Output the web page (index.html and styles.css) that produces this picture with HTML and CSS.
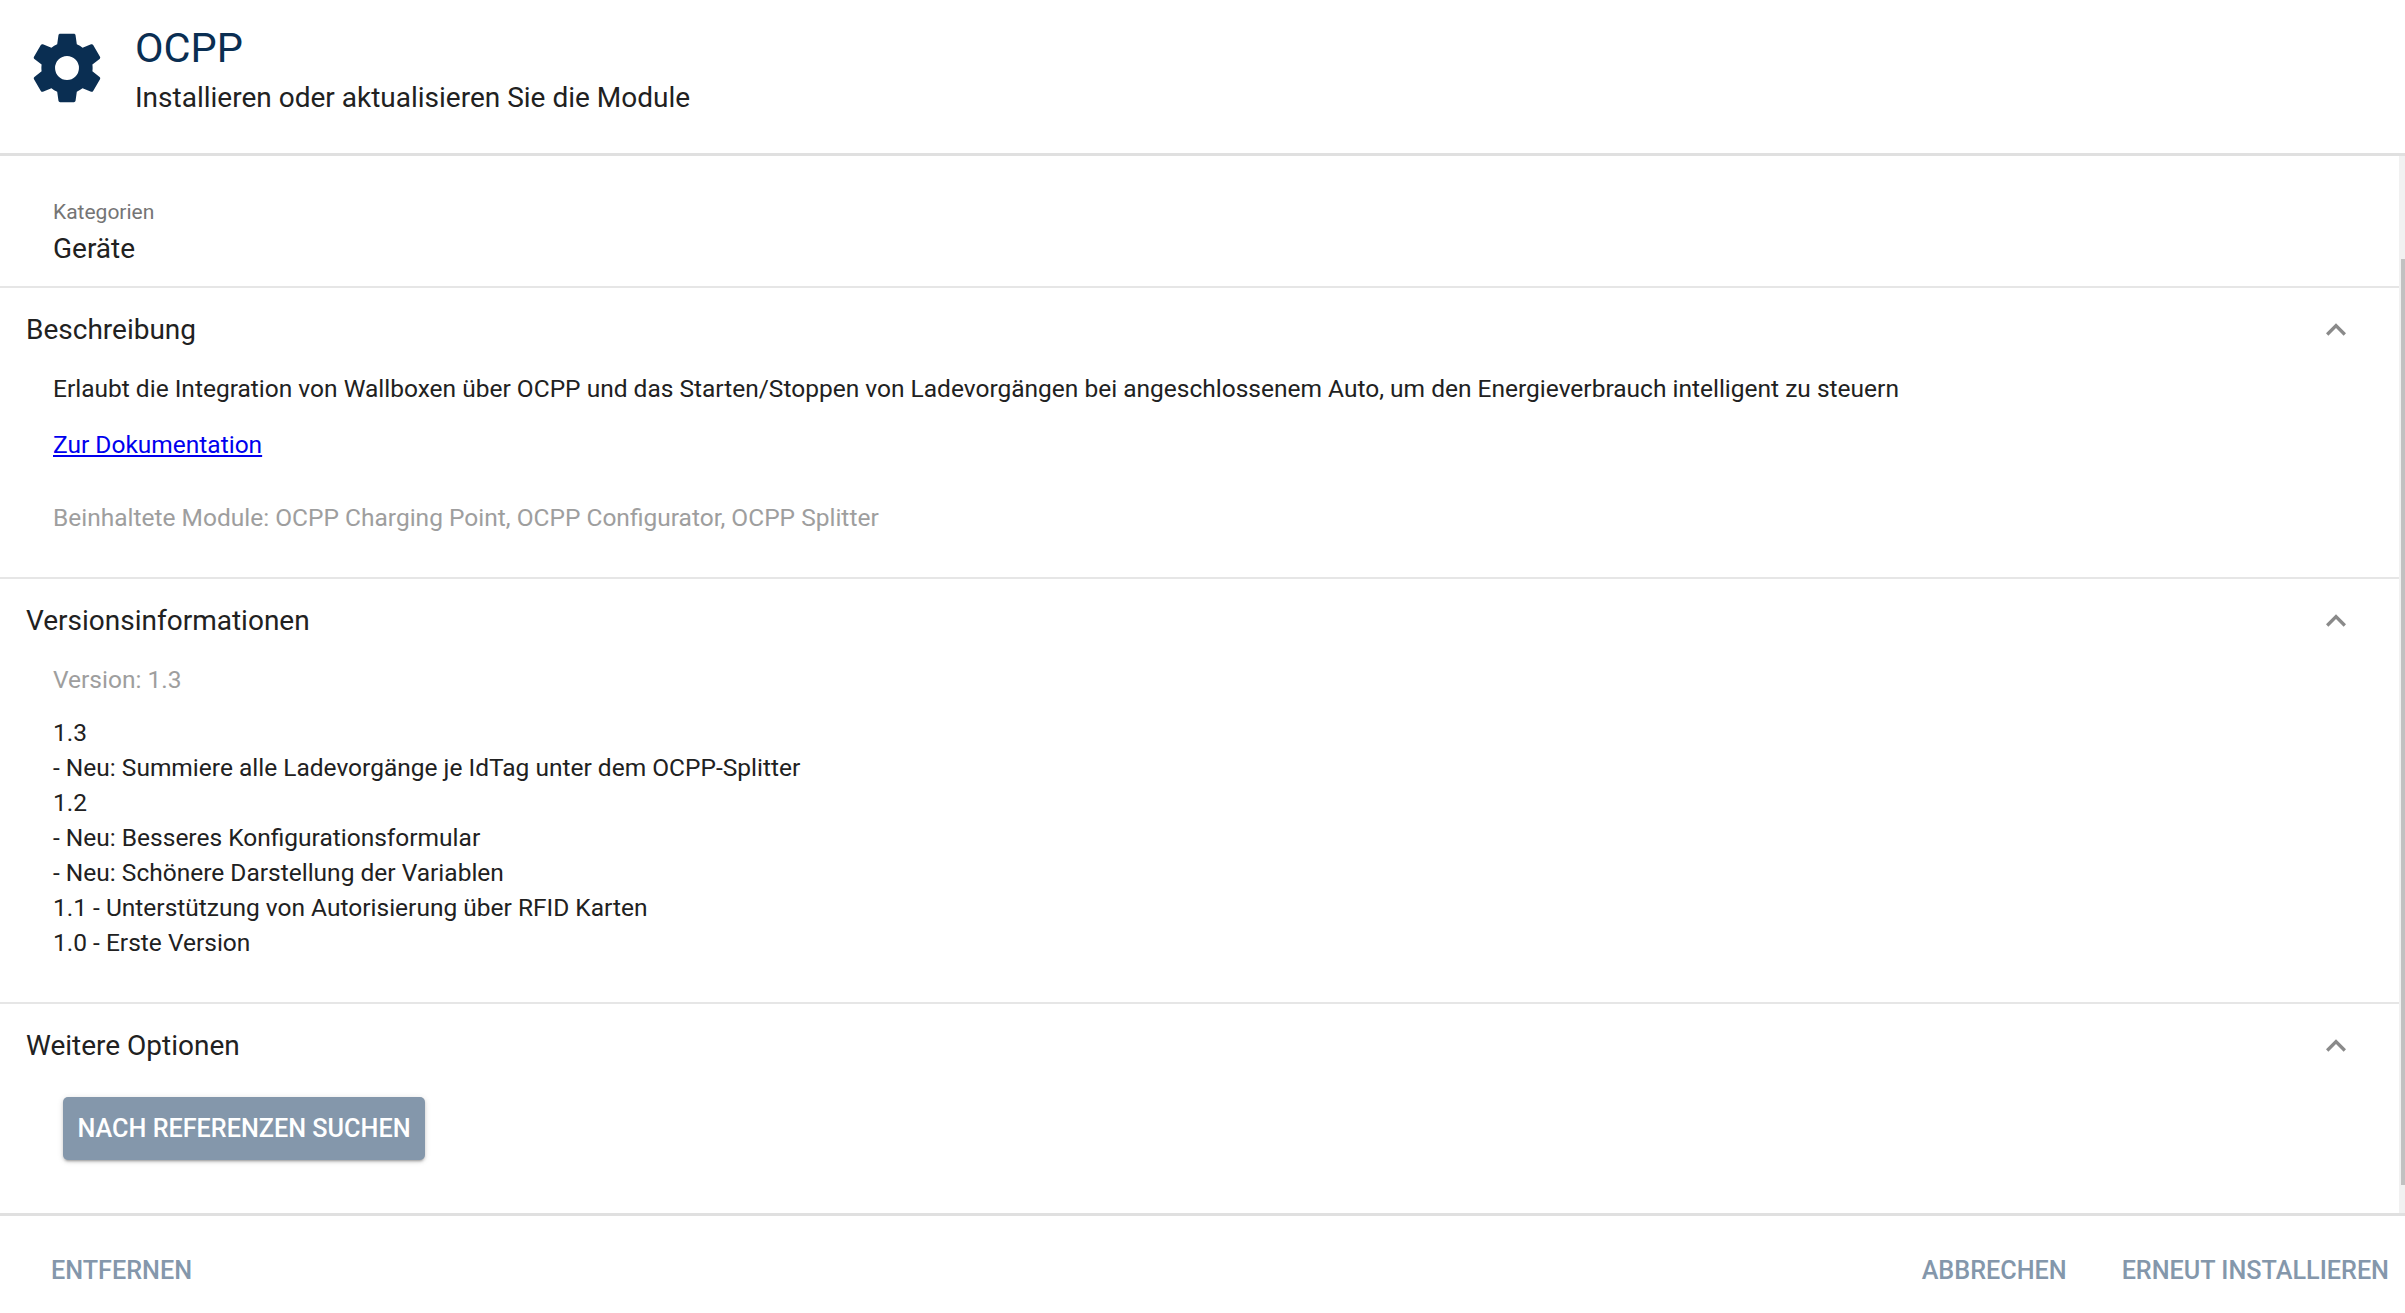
FILE: index.html
```html
<!DOCTYPE html>
<html lang="de">
<head>
    <meta charset="UTF-8">
    <title>OCPP</title>
    <link rel="stylesheet" href="styles.css">
</head>
<body>
    <div class="dialog">
        <div class="header">
            <svg class="header-icon" viewBox="0 0 24 24"><path d="M12,15.5A3.5,3.5 0 0,1 8.5,12A3.5,3.5 0 0,1 12,8.5A3.5,3.5 0 0,1 15.5,12A3.5,3.5 0 0,1 12,15.5M19.43,12.97C19.47,12.65 19.5,12.33 19.5,12C19.5,11.67 19.47,11.34 19.43,11L21.54,9.37C21.73,9.22 21.78,8.95 21.66,8.73L19.66,5.27C19.54,5.05 19.27,4.96 19.05,5.05L16.56,6.05C16.04,5.66 15.5,5.32 14.87,5.07L14.5,2.42C14.46,2.18 14.25,2 14,2H10C9.75,2 9.54,2.18 9.5,2.42L9.13,5.07C8.5,5.32 7.96,5.66 7.44,6.05L4.95,5.05C4.73,4.96 4.46,5.05 4.34,5.27L2.34,8.73C2.21,8.95 2.27,9.22 2.46,9.37L4.57,11C4.53,11.34 4.5,11.67 4.5,12C4.5,12.33 4.53,12.65 4.57,12.97L2.46,14.63C2.27,14.78 2.21,15.05 2.34,15.27L4.34,18.73C4.46,18.95 4.73,19.03 4.95,18.95L7.44,17.94C7.96,18.34 8.5,18.68 9.13,18.93L9.5,21.58C9.54,21.82 9.75,22 10,22H14C14.25,22 14.46,21.82 14.5,21.58L14.87,18.93C15.5,18.67 16.04,18.34 16.56,17.94L19.05,18.95C19.27,19.03 19.54,18.95 19.66,18.73L21.66,15.27C21.78,15.05 21.73,14.78 21.54,14.63L19.43,12.97Z"/></svg>
            <div class="header-text">
                <div class="title">OCPP</div>
                <div class="subtitle">Installieren oder aktualisieren Sie die Module</div>
            </div>
        </div>

        <div class="content">
            <div class="sections">
                <div class="categories">
                    <div class="categories-label">Kategorien</div>
                    <div class="categories-value">Geräte</div>
                </div>

                <div class="section section-desc">
                    <div class="section-head">
                        <span>Beschreibung</span>
                        <svg class="chevron" viewBox="0 0 24 24"><path d="M7.41,15.41L12,10.83L16.59,15.41L18,14L12,8L6,14L7.41,15.41Z"/></svg>
                    </div>
                    <div class="section-body">
                        <p class="desc">Erlaubt die Integration von Wallboxen über OCPP und das Starten/Stoppen von Ladevorgängen bei angeschlossenem Auto, um den Energieverbrauch intelligent zu steuern</p>
                        <p class="doc"><a href="#">Zur Dokumentation</a></p>
                        <p class="muted modules">Beinhaltete Module: OCPP Charging Point, OCPP Configurator, OCPP Splitter</p>
                    </div>
                </div>

                <div class="section section-version">
                    <div class="section-head">
                        <span>Versionsinformationen</span>
                        <svg class="chevron" viewBox="0 0 24 24"><path d="M7.41,15.41L12,10.83L16.59,15.41L18,14L12,8L6,14L7.41,15.41Z"/></svg>
                    </div>
                    <div class="section-body">
                        <p class="muted version">Version: 1.3</p>
                        <div class="changelog">
                            <div>1.3</div>
                            <div>- Neu: Summiere alle Ladevorgänge je IdTag unter dem OCPP-Splitter</div>
                            <div>1.2</div>
                            <div>- Neu: Besseres Konfigurationsformular</div>
                            <div>- Neu: Schönere Darstellung der Variablen</div>
                            <div>1.1 - Unterstützung von Autorisierung über RFID Karten</div>
                            <div>1.0 - Erste Version</div>
                        </div>
                    </div>
                </div>

                <div class="section section-options">
                    <div class="section-head">
                        <span>Weitere Optionen</span>
                        <svg class="chevron" viewBox="0 0 24 24"><path d="M7.41,15.41L12,10.83L16.59,15.41L18,14L12,8L6,14L7.41,15.41Z"/></svg>
                    </div>
                    <button class="raised">Nach Referenzen suchen</button>
                </div>
            </div>
            <div class="scrollbar"><div class="thumb"></div></div>
        </div>

        <div class="footer">
            <button class="text-btn">Entfernen</button>
            <div class="footer-right">
                <button class="text-btn">Abbrechen</button>
                <button class="text-btn">Erneut installieren</button>
            </div>
        </div>
    </div>
</body>
</html>
```

FILE: styles.css
```css
* {
    box-sizing: border-box;
}
html, body {
    margin: 0;
    height: 100%;
    overflow: hidden;
}
body {
    font-family: Roboto, "Noto Sans", sans-serif;
    color: #212121;
    background-color: #fff;
}
p {
    margin: 0;
}
.dialog {
    height: 1313px;
    display: flex;
    flex-direction: column;
}

.header {
    height: 156px;
    flex-shrink: 0;
    display: flex;
    align-items: flex-start;
    padding: 27px 0 0 26px;
    border-bottom: 3px solid #e0e0e0;
}
.header-icon {
    width: 82px;
    height: 82px;
    fill: #0a2e52;
}
.header-text {
    margin-left: 27px;
}
.title {
    font-size: 41.5px;
    font-weight: 400;
    line-height: 42px;
    color: #0a2e52;
}
.subtitle {
    font-size: 28px;
    line-height: 40px;
    margin-top: 9px;
}

.content {
    flex: 1;
    min-height: 0;
    display: flex;
}
.sections {
    flex: 1;
    min-width: 0;
}
.scrollbar {
    width: 6px;
    background-color: #f1f1f1;
    padding: 103px 0 28px 2px;
}
.thumb {
    height: 100%;
    background-color: #c1c1c1;
}

.categories {
    height: 132px;
    padding: 39px 53px 0;
    border-bottom: 2px solid #e6e6e6;
}
.categories-label {
    font-size: 21px;
    line-height: 34px;
    color: #757575;
}
.categories-value {
    font-size: 28px;
    line-height: 40px;
}

.section {
    border-bottom: 2px solid #e6e6e6;
}
.section-desc {
    height: 291px;
}
.section-version {
    height: 425px;
}
.section-options {
    border-bottom: 0;
}
.section-head {
    height: 83px;
    padding: 0 43px 0 26px;
    display: flex;
    align-items: center;
    justify-content: space-between;
    font-size: 28px;
}
.chevron {
    width: 40px;
    height: 40px;
    fill: #8a8a8a;
}
.section-body {
    padding: 0 53px;
    font-size: 24.5px;
    line-height: 36px;
}
.doc {
    margin-top: 20px;
}
.doc a {
    color: #0000ee;
}
.modules {
    margin-top: 37px;
}
.muted {
    color: #9e9e9e;
}
.changelog {
    margin-top: 17px;
    line-height: 35px;
}

.raised {
    display: block;
    margin: 10px 0 0 63px;
    width: 362px;
    height: 63px;
    border: 0;
    border-radius: 5px;
    background-color: #8497ab;
    color: #fff;
    font-family: inherit;
    font-size: 25.2px;
    font-weight: 500;
    text-transform: uppercase;
    box-shadow: 0 3px 2px -2px rgba(0,0,0,.2), 0 2px 3px 0 rgba(0,0,0,.14), 0 1px 6px 0 rgba(0,0,0,.12);
}

.footer {
    flex-shrink: 0;
    height: 100px;
    display: flex;
    justify-content: space-between;
    align-items: flex-start;
    border-top: 3px solid #e0e0e0;
    padding: 37px 16px 0 51px;
}
.footer-right {
    display: flex;
    gap: 55px;
}
.text-btn {
    padding: 0;
    border: 0;
    background: none;
    color: #8497ab;
    font-family: inherit;
    font-size: 25.2px;
    font-weight: 500;
    line-height: 36px;
    text-transform: uppercase;
}
```
